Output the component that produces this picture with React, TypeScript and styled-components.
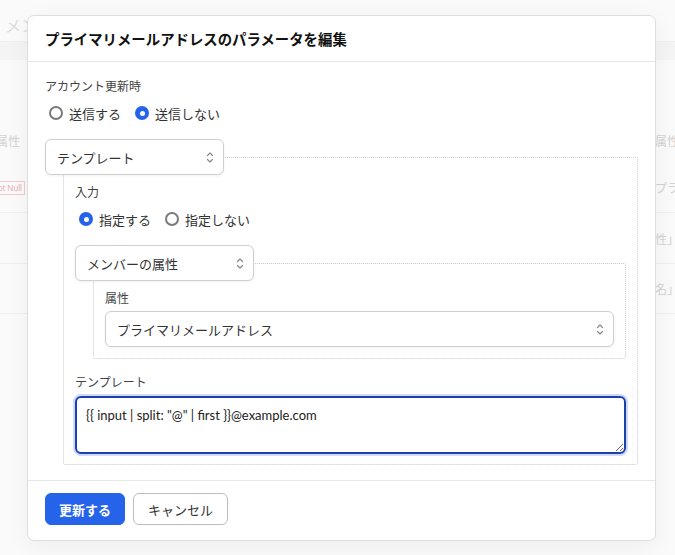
import React, { useState } from 'react';
import styled, { createGlobalStyle } from 'styled-components';

const GlobalStyle = createGlobalStyle`
  html, body {
    margin: 0;
    padding: 0;
    background: #f9f9f9;
    font-family: "Noto Sans CJK JP", "Noto Sans", sans-serif;
  }
  * { box-sizing: border-box; }
`;

const Page = styled.div`
  position: relative;
  width: 675px;
  height: 555px;
  overflow: hidden;
  background: #fafafa;
  color: #d2d2d2;
  font-size: 12px;
`;

const TopBar = styled.div`
  height: 42px;
  padding: 15px 0 0 5px;
  border-bottom: 1px solid #efefef;
`;

const TabText = styled.div`
  width: 22px;
  overflow: hidden;
  white-space: nowrap;
  font-size: 16px;
  line-height: 20px;
  color: #dcdcdc;
`;

const Band = styled.div`
  height: 18px;
  background: #f4f4f4;
`;

const Table = styled.div`
  display: grid;
  grid-template-columns: 27px 1fr 20px;
  margin-top: 58px;
`;

const Cell = styled.div<{ $align?: 'left' | 'right'; $h: number; $line?: boolean }>`
  height: ${(p) => p.$h}px;
  display: flex;
  align-items: center;
  justify-content: ${(p) => (p.$align === 'right' ? 'flex-end' : 'flex-start')};
  overflow: hidden;
  white-space: nowrap;
  border-bottom: ${(p) => (p.$line ? '1px solid #efefef' : 'none')};
  padding-right: ${(p) => (p.$align === 'right' ? '7px' : '0')};
`;

const BadgeCell = styled(Cell)`
  padding-right: 2px;
`;

const Badge = styled.span`
  border: 1px solid #f3c9c9;
  color: #eab0b0;
  font-family: "Liberation Sans", sans-serif;
  font-size: 8.5px;
  padding: 0 2px;
  line-height: 12px;
`;

const Modal = styled.div`
  position: absolute;
  left: 27px;
  top: 15px;
  width: 629px;
  background: #fff;
  border: 1px solid #dedede;
  border-radius: 7px;
  box-shadow: 0 6px 24px rgba(0, 0, 0, 0.05);
  display: flex;
  flex-direction: column;
`;

const Header = styled.div`
  height: 46px;
  padding: 0 17px;
  display: flex;
  align-items: center;
  border-bottom: 1px solid #e6e6e6;
`;

const Title = styled.h2`
  margin: 0;
  font-size: 14.4px;
  font-weight: 700;
  color: #111;
`;

const Body = styled.div`
  padding: 15px 17px 15px;
  display: flex;
  flex-direction: column;
`;

const Label = styled.div<{ $mb?: number }>`
  font-size: 12px;
  line-height: 18px;
  color: #444;
  margin-bottom: ${(p) => p.$mb ?? 4}px;
`;

const RadioRow = styled.div`
  height: 24px;
  display: flex;
  align-items: center;
  gap: 14px;
  margin-bottom: 14px;
  padding-left: 4px;
`;

const RadioOption = styled.label`
  display: flex;
  align-items: center;
  gap: 6px;
  font-size: 13px;
  color: #333;
  cursor: pointer;
`;

const RadioDot = styled.span<{ $on: boolean }>`
  width: 14px;
  height: 14px;
  border-radius: 50%;
  border: ${(p) => (p.$on ? 'none' : '2px solid #7a7a7a')};
  background: ${(p) => (p.$on ? '#2563eb' : '#fff')};
  display: flex;
  align-items: center;
  justify-content: center;
  &::after {
    content: '';
    display: ${(p) => (p.$on ? 'block' : 'none')};
    width: 5px;
    height: 5px;
    border-radius: 50%;
    background: #fff;
  }
`;

const Group = styled.div`
  display: flex;
  flex-direction: column;
  align-items: flex-start;
`;

const SelectBox = styled.button<{ $w?: number }>`
  position: relative;
  z-index: 1;
  width: ${(p) => (p.$w ? `${p.$w}px` : '100%')};
  height: 36px;
  padding: 0 9px 0 11px;
  display: flex;
  align-items: center;
  justify-content: space-between;
  background: #fff;
  border: 1px solid #cfcfcf;
  border-radius: 6px;
  box-shadow: 0 1px 3px rgba(0, 0, 0, 0.06);
  font-family: inherit;
  font-size: 13px;
  color: #333;
  text-align: left;
`;

const Box = styled.div`
  align-self: stretch;
  margin: -18px 0 0 18px;
  border: 1px dotted #c9c9c9;
  border-radius: 2px;
  padding: 25px 11px 10px;
  display: flex;
  flex-direction: column;
`;

const InnerBox = styled(Box)`
  padding-bottom: 11px;
  margin-bottom: 14px;
`;

const TextArea = styled.textarea`
  width: 100%;
  height: 58px;
  resize: vertical;
  padding: 8px 9px;
  font-family: Lato, "Noto Sans CJK JP", sans-serif;
  font-size: 13px;
  line-height: 18px;
  color: #222;
  border: 2px solid #1e40af;
  border-radius: 6px;
  box-shadow: 0 0 0 2px #cddcfb;
  outline: none;
`;

const Footer = styled.div`
  border-top: 1px solid #e6e6e6;
  padding: 12px 17px 15px;
  display: flex;
  gap: 8px;
`;

const Button = styled.button<{ $primary?: boolean }>`
  height: 32px;
  padding: 0 ${(p) => (p.$primary ? 13 : 14)}px;
  border-radius: 6px;
  font-family: inherit;
  font-size: 13px;
  font-weight: ${(p) => (p.$primary ? 700 : 400)};
  background: ${(p) => (p.$primary ? '#2563eb' : '#fff')};
  color: ${(p) => (p.$primary ? '#fff' : '#333')};
  border: 1px solid ${(p) => (p.$primary ? '#2563eb' : '#bdbdbd')};
  cursor: pointer;
`;

const Chevrons = () => (
  <svg width="8" height="13" viewBox="0 0 8 13" fill="none" stroke="#8a8a8a" strokeWidth="1.2" strokeLinecap="round" strokeLinejoin="round">
    <path d="M1.5 4.5 4 2l2.5 2.5" />
    <path d="M1.5 8.5 4 11l2.5-2.5" />
  </svg>
);

const Radio: React.FC<{ on: boolean; label: string; onClick: () => void }> = ({ on, label, onClick }) => (
  <RadioOption onClick={onClick}>
    <RadioDot $on={on} />
    {label}
  </RadioOption>
);

const App: React.FC = () => {
  const [send, setSend] = useState(false);
  const [specify, setSpecify] = useState(true);
  const [template, setTemplate] = useState('{{ input | split: "@" | first }}@example.com');

  return (
    <Page>
      <GlobalStyle />
      <TopBar>
        <TabText>メンバー</TabText>
      </TopBar>
      <Band />
      <Table>
        <Cell $align="right" $h={45}>メンバーの属性</Cell>
        <Cell $h={45} />
        <Cell $h={45}>属性名</Cell>
        <BadgeCell $align="right" $h={50} $line><Badge>Not Null</Badge></BadgeCell>
        <Cell $h={50} $line />
        <Cell $h={50} $line>プライマリ</Cell>
        <Cell $align="right" $h={51} $line />
        <Cell $h={51} $line />
        <Cell $h={51} $line>性」</Cell>
        <Cell $align="right" $h={50} $line />
        <Cell $h={50} $line />
        <Cell $h={50} $line>名」</Cell>
      </Table>

      <Modal>
        <Header>
          <Title>プライマリメールアドレスのパラメータを編集</Title>
        </Header>
        <Body>
          <Label $mb={6}>アカウント更新時</Label>
          <RadioRow>
            <Radio on={send} label="送信する" onClick={() => setSend(true)} />
            <Radio on={!send} label="送信しない" onClick={() => setSend(false)} />
          </RadioRow>
          <Group>
            <SelectBox $w={179}>
              テンプレート
              <Chevrons />
            </SelectBox>
            <Box>
              <Label $mb={6}>入力</Label>
              <RadioRow>
                <Radio on={specify} label="指定する" onClick={() => setSpecify(true)} />
                <Radio on={!specify} label="指定しない" onClick={() => setSpecify(false)} />
              </RadioRow>
              <Group>
                <SelectBox $w={179}>
                  メンバーの属性
                  <Chevrons />
                </SelectBox>
                <InnerBox>
                  <Label>属性</Label>
                  <SelectBox>
                    プライマリメールアドレス
                    <Chevrons />
                  </SelectBox>
                </InnerBox>
              </Group>
              <Label $mb={5}>テンプレート</Label>
              <TextArea value={template} onChange={(e) => setTemplate(e.target.value)} />
            </Box>
          </Group>
        </Body>
        <Footer>
          <Button $primary>更新する</Button>
          <Button>キャンセル</Button>
        </Footer>
      </Modal>
    </Page>
  );
};

export default App;
